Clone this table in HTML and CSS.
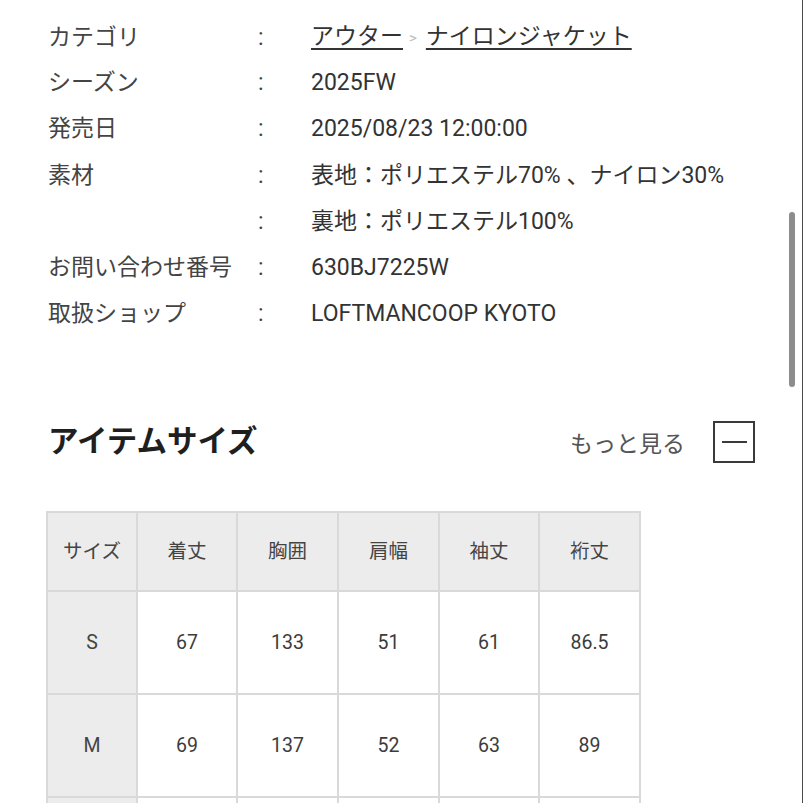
FILE: index.html
```html
<!DOCTYPE html>
<html lang="ja">
<head>
<meta charset="utf-8">
<link rel="stylesheet" href="styles.css">
</head>
<body>
<div class="page">
  <div class="spec">
    <div class="row"><div class="label">カテゴリ</div><div class="colon">:</div><div class="value"><a class="link">アウター</a><span class="sep">&gt;</span><a class="link">ナイロンジャケット</a></div></div>
    <div class="row"><div class="label">シーズン</div><div class="colon">:</div><div class="value">2025FW</div></div>
    <div class="row"><div class="label">発売日</div><div class="colon">:</div><div class="value">2025/08/23 12:00:00</div></div>
    <div class="row"><div class="label">素材</div><div class="colon">:</div><div class="value">表地：ポリエステル70% 、ナイロン30%</div></div>
    <div class="row"><div class="label"></div><div class="colon">:</div><div class="value">裏地：ポリエステル100%</div></div>
    <div class="row"><div class="label">お問い合わせ番号</div><div class="colon">:</div><div class="value">630BJ7225W</div></div>
    <div class="row"><div class="label">取扱ショップ</div><div class="colon">:</div><div class="value">LOFTMANCOOP KYOTO</div></div>
  </div>

  <div class="size-head">
    <h2 class="title">アイテムサイズ</h2>
    <div class="more">
      <span class="more-text">もっと見る</span>
      <span class="toggle"><span class="bar"></span></span>
    </div>
  </div>

  <table class="sizes">
    <colgroup>
      <col class="c1"><col class="c2"><col class="c3"><col class="c4"><col class="c5"><col class="c6">
    </colgroup>
    <tr class="hrow"><th>サイズ</th><th>着丈</th><th>胸囲</th><th>肩幅</th><th>袖丈</th><th>裄丈</th></tr>
    <tr class="drow"><th>S</th><td>67</td><td>133</td><td>51</td><td>61</td><td>86.5</td></tr>
    <tr class="drow"><th>M</th><td>69</td><td>137</td><td>52</td><td>63</td><td>89</td></tr>
    <tr class="drow"><th>L</th><td>71</td><td>141</td><td>53</td><td>65</td><td>91.5</td></tr>
  </table>
</div>
<div class="scrollbar"></div>
<div class="edge"></div>
</body>
</html>
```
FILE: styles.css
```css
html, body {
  margin: 0;
  padding: 0;
  background: #fff;
  overflow: hidden;
}
body {
  width: 803px;
  height: 803px;
  position: relative;
  font-family: Roboto, "Noto Sans CJK JP", sans-serif;
  color: #3a3a3a;
}
.page {
  padding-top: 14px;
}
.spec {
  padding-left: 48px;
}
.row {
  display: grid;
  grid-template-columns: 210px 53px 1fr;
  height: 46.2px;
  align-items: center;
  font-size: 23px;
  line-height: 46px;
}
.label {
  color: #444;
}
.colon {
  color: #444;
}
.value {
  color: #333;
  white-space: nowrap;
}
.link {
  color: #333;
  text-decoration: underline;
  text-decoration-thickness: 2px;
  text-underline-offset: 4px;
}
.sep {
  color: #bbb;
  font-size: 15px;
  margin: 0 9px 0 6px;
  position: relative;
  top: -1px;
}
.size-head {
  display: flex;
  align-items: center;
  justify-content: space-between;
  margin-top: 80px;
  height: 50px;
  padding-left: 48px;
  padding-right: 48px;
}
.title {
  margin: 0;
  font-size: 30.5px;
  font-weight: 700;
  color: #1f1f1f;
  line-height: 50px;
}
.more {
  display: flex;
  align-items: center;
}
.more-text {
  font-size: 23px;
  color: #555;
  margin-right: 28px;
}
.toggle {
  width: 38px;
  height: 38px;
  border: 2px solid #3a3a3a;
  display: flex;
  align-items: center;
  justify-content: center;
}
.bar {
  width: 25px;
  height: 2px;
  background: #3a3a3a;
}
.sizes {
  margin-top: 44px;
  margin-left: 46px;
  border-collapse: separate;
  border-spacing: 2px;
  background: #d9d9d9;
  table-layout: fixed;
  width: 595px;
  font-size: 19.5px;
  color: #3c3c3c;
}
.c1 { width: 88px; }
.c2 { width: 98px; }
.c3 { width: 99px; }
.c4 { width: 99px; }
.c5 { width: 98px; }
.c6 { width: 99px; }
.sizes th, .sizes td {
  padding: 0;
  text-align: center;
  font-weight: 400;
}
.sizes th {
  color: #444;
}
.hrow th {
  background: #ececec;
  height: 73px;
  padding-bottom: 4px;
}
.drow th {
  background: #ececec;
  height: 101px;
}
.drow td {
  background: #fff;
  height: 101px;
}
.scrollbar {
  position: absolute;
  left: 789px;
  top: 212px;
  width: 6px;
  height: 175px;
  border-radius: 3px;
  background: #8c8c8c;
}
.edge {
  position: absolute;
  right: 0;
  top: 0;
  width: 1px;
  height: 803px;
  background: #4a4a4a;
}
```
